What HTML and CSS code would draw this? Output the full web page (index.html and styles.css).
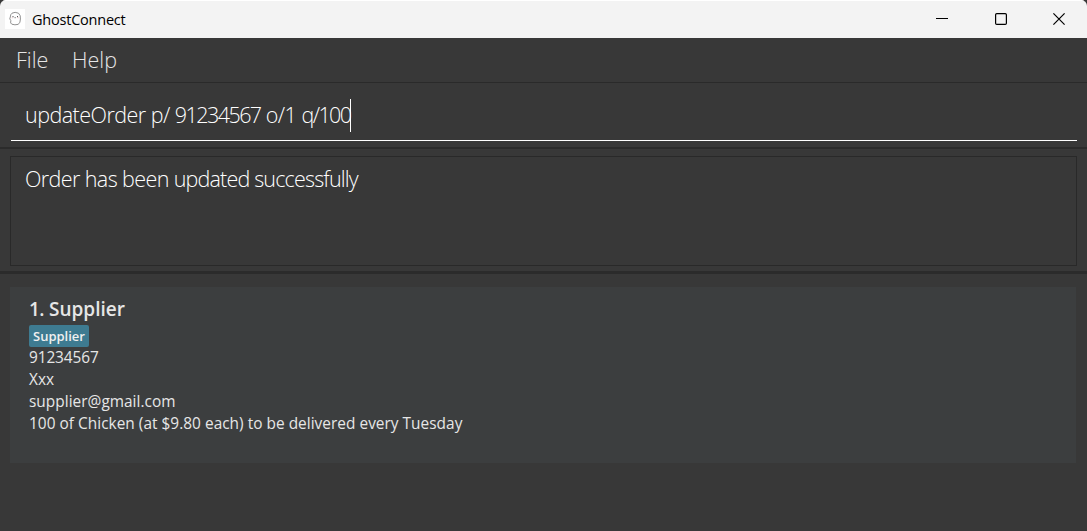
FILE: index.html
```html
<!DOCTYPE html>
<html lang="en">
<head>
<meta charset="utf-8">
<title>GhostConnect</title>
<link rel="stylesheet" href="styles.css">
</head>
<body>
<div class="window">
  <header class="titlebar">
    <svg class="app-icon" width="20" height="20" viewBox="0 0 20 20">
      <rect width="20" height="20" fill="#fff"/>
      <path d="M7 4.2Q10 2.5 13.5 4.2Q16 6.5 15.4 10Q15.5 14.5 13 15.4Q10 16.3 6.8 15.2Q5 14.5 5.8 11.5Q4 10 5.3 8Q5.3 5.4 7 4.2Z" fill="none" stroke="#858585" stroke-width=".9"/>
      <path d="M7.5 7.6h1M12 7.6h1" stroke="#555" stroke-width="1.1"/>
      <path d="M9.4 8.7h1.6" stroke="#777" stroke-width=".8"/>
      <path d="M6.7 8.8h1M12.7 8.8h1" stroke="#efb5bb" stroke-width=".8"/>
    </svg>
    <span class="title">GhostConnect</span>
    <div class="controls">
      <svg width="12" height="12" viewBox="0 0 12 12"><path d="M0 5.5h12" stroke="#000"/></svg>
      <svg width="12" height="12" viewBox="0 0 12 12"><rect x=".6" y=".6" width="10.8" height="10.8" rx="1.2" fill="none" stroke="#000" stroke-width="1.2"/></svg>
      <svg width="12" height="12" viewBox="0 0 12 12"><path d="M.4.4l11.2 11.2M11.6.4L.4 11.6" stroke="#000" stroke-width="1.2"/></svg>
    </div>
  </header>
  <nav class="menu"><span class="file">File</span><span class="help">Help</span></nav>
  <section class="command">
    <div class="field"><span class="command-text"><span class="verb">updateOrder p/ </span><span class="number">91234567</span><span class="option"> o/1 </span><span class="quantity">q/100</span></span><i class="caret"></i></div>
  </section>
  <section class="result">
    <div class="result-box"><span class="result-lead">Order has been </span><span class="result-text">updated successfully</span></div>
  </section>
  <main class="list">
    <article class="card">
      <h1 class="name"><span class="index">1.</span><span class="name-text">Supplier</span></h1>
      <div class="tag"><span>Supplier</span></div>
      <p class="line phone">91234567</p>
      <p class="line address">Xxx</p>
      <p class="line email">supplier@gmail.com</p>
      <p class="line order">100 of Chicken (at $9.80 each) to be delivered every Tuesday</p>
    </article>
  </main>
</div>
</body>
</html>
```
FILE: styles.css
```css
* { box-sizing: border-box; }
body { margin: 0; background: #383838; font-family: "Open Sans", "Noto Sans", sans-serif; }
.window { width: 1087px; height: 531px; display: flex; flex-direction: column; overflow: hidden; background: #383838; border-radius: 6px 6px 0 0; white-space: nowrap; }
.titlebar { height: 38px; flex: none; display: flex; align-items: center; background: #f3f3f3; padding: 0 22px 0 5px; border-top: 1px solid #fff; }
.app-icon { display: block; margin-bottom: 1px; }
.title { margin-left: 7px; color: #000; font-size: 14.5px; line-height: 20px; letter-spacing: -.22px; padding-top: 1px; }
.controls { margin-left: auto; display: flex; gap: 47px; padding-bottom: 1px; }
.controls svg { display: block; }
.controls svg:nth-child(2) { margin-right: -1px; }
.menu { height: 45px; flex: none; display: flex; padding: 0 16px; gap: 24px; border-bottom: 1px solid #2a2a2a; color: #e6e6e6; font-size: 21.5px; font-weight: 300; line-height: 43px; }
.file { width: 32px; }
.command { height: 66px; flex: none; padding: 11px 10px 0 11px; border-bottom: 2px solid #2b2b2b; }
.field { height: 47px; display: flex; align-items: flex-start; padding: 5px 0 0 14px; border-bottom: 1px solid #fff; color: #fff; font-size: 21.5px; font-weight: 300; line-height: 33px; }
.command-text { width: 325px; white-space: pre; line-height: 32px; }
.verb { letter-spacing: -.53px; }
.number { letter-spacing: -1.55px; }
.option { letter-spacing: -.5px; }
.quantity { letter-spacing: -1.6px; }
.caret { width: 1px; height: 33px; background: #fff; }
.result { height: 125px; flex: none; padding: 7px 10px 0; border-bottom: 3px solid #2b2b2b; }
.result-box { height: 110px; border: 1px solid #292929; padding: 6px 14px; color: #fff; font-size: 21.5px; font-weight: 300; line-height: 32px; white-space: pre; }
.result-lead { letter-spacing: -.6px; }
.result-text { letter-spacing: -.83px; }
.list { flex: 1; padding: 13px 11px 0 10px; }
.card { height: 176px; background: #3c3e3f; padding: 10px 19px; color: #e6e6e6; }
.name { margin: 0; display: flex; height: 28px; font-size: 19px; font-weight: 600; line-height: 25px; }
.index { width: 20px; letter-spacing: -.5px; }
.tag { width: 60px; height: 22px; background: #3e7b91; border-radius: 2px; padding: 0 4px; font-size: 13px; font-weight: 600; line-height: 22px; color: #f0f0f0; }
.line { margin: 0; height: 22px; font-size: 15.4px; line-height: 22px; letter-spacing: .03px; }
.phone { letter-spacing: -.1px; }
```
